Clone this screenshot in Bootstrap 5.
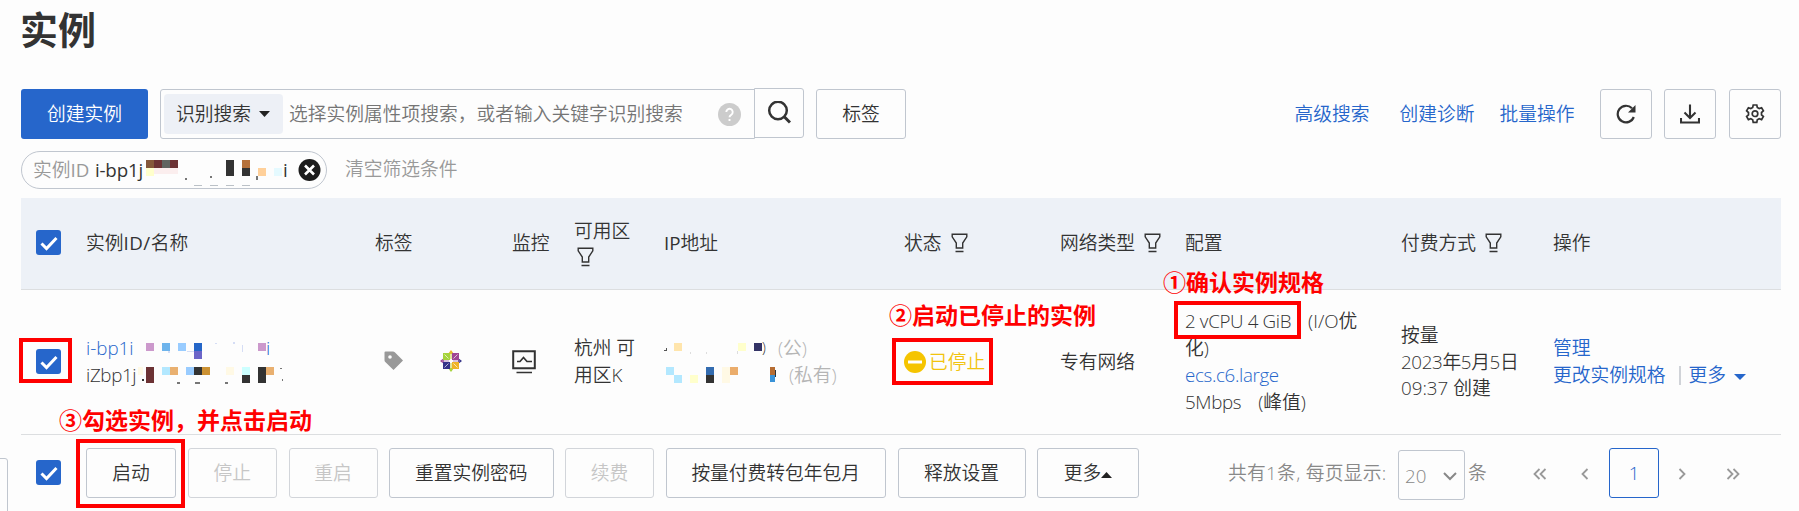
<!DOCTYPE html>
<html lang="zh-CN">
<head>
<meta charset="utf-8">
<title>实例</title>
<link rel="stylesheet" href="https://cdn.jsdelivr.net/npm/bootstrap@5.3.0/dist/css/bootstrap.min.css">
<style>
:root{--ink:#333;--brand:#2666cb;--edge:#c0c6cf}
body{width:1799px;height:511px;overflow:hidden;background:#fdfdfd;color:var(--ink);font:350 18.75px/26.8px "Open Sans","Noto Sans CJK SC",sans-serif}
a{color:var(--brand);text-decoration:none}
svg{display:block;flex:none}
.page{padding:0 18px 0 21px}
h1{font:700 38px/54px "Noto Sans CJK SC",sans-serif;margin:0 0 0 -1px;padding-top:1px;height:89px}
.tools{height:50px}
.btn{--bs-btn-font-size:18.75px;--bs-btn-font-weight:350;--bs-btn-padding-x:0;--bs-btn-padding-y:0;--bs-btn-border-radius:3px;height:50px;line-height:46px;white-space:nowrap;flex:none;display:flex;align-items:center;justify-content:center}
.btn-line{--bs-btn-border-color:var(--edge);--bs-btn-color:#333;--bs-btn-disabled-color:#c6c6c6;--bs-btn-disabled-border-color:#d2d5da;--bs-btn-disabled-opacity:1}
.btn-brand{background:var(--brand);color:#fff;width:127px}
.search{width:595px;height:50px;border:1px solid var(--edge);border-radius:3px 0 0 3px;padding-left:3px;margin-left:12px}
.mode{width:119px;height:40px;background:#edf0f6;border-radius:4px;padding-left:12px;gap:8px}
.placeholder-text{color:#757575;padding-left:6px}
.go{width:50px;margin-left:-1px;margin-top:-2px;border-radius:0 3px 3px 0}
.chips{height:59px;padding-top:12px}
.chip{width:306px;height:38px;border:1px solid var(--edge);border-radius:19px;padding-left:11px}
.muted{color:#999}
.latin{letter-spacing:-.35px}
.spaced{margin-left:17px}
.grid{table-layout:fixed;width:1760px;margin:0;border-collapse:separate;border-spacing:0}
.grid th,.grid td{font-weight:350;padding:0 0 0 12px;vertical-align:middle;border-bottom:1px solid #dcdee0;text-align:left}
.grid th{height:92px;background:#edf1f7}
.grid td{height:145px}
.grid th:first-child,.grid td:first-child{padding:0 0 2px 15px}
.box{width:25px;height:25px;background:var(--brand);border-radius:3px}
.foot{height:76px;padding-left:15px}
.foot .btn+.btn{margin-left:11.5px}
.pick{width:67px;height:50px;border:1px solid var(--edge);border-radius:3px;padding:2px 7px 0 6px;color:#888}
.mark-box{position:absolute;border:4px solid #f00}
.mark-text{position:absolute;color:#f00;font:700 23px/30px "Noto Sans CJK SC",sans-serif;white-space:nowrap}
.edge-tab{position:absolute;left:-5px;top:458px;width:13px;height:60px;border:1px solid var(--edge);border-radius:3px}
</style>
</head>
<body class="position-relative">
<svg width="0" height="0" class="position-absolute">
<defs>
<g id="filter" fill="none" stroke="#333" stroke-width="1.4"><path d="M1.200 1.200h14.600v2.600L11.700 10v5H5.300v-5L1.200 3.800z"/><path d="M4.500 18.500h8" stroke-width="1.500"/></g>
<g id="tick"><path d="M5.500 13.500l5 5L20.500 8" fill="none" stroke="#fff" stroke-width="3"/></g>
</defs>
</svg>
<main class="page">
<h1>实例</h1>
<div class="tools d-flex align-items-center">
  <button class="btn btn-brand">创建实例</button>
  <div class="search d-flex align-items-center flex-shrink-0">
    <div class="mode d-flex align-items-center"><span>识别搜索</span><svg width="11" height="6"><path d="M0 0h11L5.500 6z" fill="#222"/></svg></div>
    <span class="placeholder-text">选择实例属性项搜索，或者输入关键字识别搜索</span>
    <svg class="ms-auto" style="margin-right:13px" width="23" height="23"><circle cx="11.500" cy="11.500" r="11.500" fill="#ccc"/><path d="M8.300 9.100a3.200 3.200 0 1 1 5 2.600c-1.300.9-1.800 1.300-1.800 2.600M11.500 16v2" stroke="#fff" stroke-width="1.900" fill="none"/></svg>
  </div>
  <button class="btn btn-line go"><svg width="24" height="24" fill="none" stroke="#333"><circle cx="11" cy="9.500" r="8.800" stroke-width="2.500"/><path d="M17 15.500l6 6" stroke-width="3"/></svg></button>
  <button class="btn btn-line" style="width:90px;margin-left:12px">标签</button>
  <a class="ms-auto" href="#">高级搜索</a><a href="#" style="margin-left:30px">创建诊断</a><a href="#" style="margin-left:25px">批量操作</a>
  <button class="btn btn-line" style="width:52px;margin-left:25.500px"><svg width="20" height="20"><path d="M17.800 13A8.300 8.300 0 1 1 16 4.300" fill="none" stroke="#333" stroke-width="2.200"/><path d="M19.500 1v7.500H12z" fill="#333"/></svg></button>
  <button class="btn btn-line" style="width:52px;margin-left:12px"><svg width="20" height="20" fill="none" stroke="#333" stroke-width="2.100"><path d="M10 .5v13M4.500 8.500L10 14l5.500-5.500M1 14v4.500h18V14"/></svg></button>
  <button class="btn btn-line" style="width:52px;margin-left:13px"><svg width="20" height="20" viewBox="0 0 20 20" fill="none" stroke="#333" stroke-width="1.700"><path d="M8.200 1h3.600l.5 2.500 1.900 1.100 2.400-.9 1.800 3.100-1.900 1.700v2.300l1.900 1.700-1.800 3.100-2.400-.9-1.900 1.100-.5 2.500H8.200l-.5-2.500-1.900-1.100-2.400.9-1.800-3.100 1.900-1.700V8.500L1.600 6.800l1.800-3.100 2.400.9 1.900-1.100z"/><circle cx="10" cy="9.700" r="2.800"/></svg></button>
</div>
<div class="chips d-flex align-items-start">
  <div class="chip d-flex align-items-center">
    <span class="muted" style="width:62px">实例<span class="fw-normal">ID</span></span>
    <span class="fw-normal" style="width:51px;letter-spacing:-.2px">i-bp1j</span>
    <svg width="137" height="36" shape-rendering="crispEdges"><path fill="#fdfdfd" d="M0 8h137v17H0z"/>
      <path fill="#6c3234" d="M8 8h8v8H8zM24 8h8v8h-8z"/><path fill="#85583a" d="M0 8h8v8H0z"/><path fill="#5f6460" d="M16 8h8v8h-8z"/><path fill="#ffffcc" d="M0 16h8v8H0z"/><path fill="#fbeeee" d="M8 16h24v6H8z"/>
      <path fill="#333" d="M80 8h8v16h-8zM96 16h8v8h-8z"/><path fill="#b5713b" d="M96 8h8v8h-8z"/><path fill="#ffd09a" d="M112 16h8v8h-8z"/><path fill="#e5faff" d="M128 16h8v8h-8z"/>
      <path fill="#777" d="M39 26h2v2h-2zM64 24h2v2h-2zM110 24h2v4h-2z"/><path fill="#bbc1c7" d="M48 33h8v1h-8zM64 33h8v1h-8zM80 33h8v1h-8zM96 33h8v1h-8z"/></svg>
    <span class="fw-normal">i</span>
    <svg class="ms-auto" style="margin-right:5px" width="23" height="23"><circle cx="11.500" cy="11" r="11" fill="#1c1c1c"/><path d="M7 6.500l9 9M16 6.500l-9 9" stroke="#fff" stroke-width="2.600"/></svg>
  </div>
  <span class="muted" style="margin-left:18px;padding-top:5px">清空筛选条件</span>
</div>
<table class="grid">
<colgroup><col style="width:53px"><col style="width:289px"><col style="width:137px"><col style="width:62px"><col style="width:90px"><col style="width:240px"><col style="width:156px"><col style="width:125px"><col style="width:216px"><col style="width:152px"><col style="width:240px"></colgroup>
<thead><tr>
  <th><svg class="box"><use href="#tick"/></svg></th>
  <th>实例<span class="fw-normal" style="letter-spacing:.5px">ID/</span>名称</th><th>标签</th><th>监控</th>
  <th>可用区<svg width="18" height="20" style="margin:3px 0 2px 3px"><use href="#filter"/></svg></th>
  <th><span class="fw-normal">IP</span>地址</th>
  <th><div class="d-flex align-items-center">状态<svg style="margin-left:9px" width="18" height="20"><use href="#filter"/></svg></div></th>
  <th><div class="d-flex align-items-center">网络类型<svg style="margin-left:9px" width="18" height="20"><use href="#filter"/></svg></div></th>
  <th>配置</th>
  <th><div class="d-flex align-items-center">付费方式<svg style="margin-left:9px" width="18" height="20"><use href="#filter"/></svg></div></th>
  <th>操作</th>
</tr></thead>
<tbody><tr>
  <td><svg class="box"><use href="#tick"/></svg></td>
  <td>
    <div class="d-flex"><a href="#" style="width:52px">i-bp1i</a><svg width="128" height="27" shape-rendering="crispEdges"><path fill="#cc99cc" d="M8 8h8v8H8zM120 8h8v8h-8z"/><path fill="#6eb4ec" d="M24 8h8v8h-8z"/><path fill="#99ccff" d="M40 8h8v8h-8z"/><path fill="#2566c8" d="M56 8h8v8h-8z"/><path fill="#6c65c8" d="M56 16h8v8h-8z"/><path fill="#d5ddf5" d="M30 16h2v2h-2zM49 16h7v1h-7zM77 8h2v1h-2zM95 7h2v2h-2zM104 10h1v7h-1z"/></svg><a href="#">i</a></div>
    <div class="d-flex"><span class="latin" style="width:52px">iZbp1j</span><svg width="145" height="27" shape-rendering="crispEdges"><path fill="#fff9e5" d="M0 5h5v8H0zM88 5h8v8h-8z"/><path fill="#6c3234" d="M8 5h8v16H8z"/><path fill="#b3e8ff" d="M24 5h8v8h-8z"/><path fill="#e9b070" d="M32 5h8v8h-8zM128 5h8v8h-8z"/><path fill="#99ccff" d="M48 5h8v8h-8z"/><path fill="#333" d="M56 5h8v8h-8zM104 13h8v8h-8zM120 5h8v16h-8zM4 17h2v2H4z"/><path fill="#cc9233" d="M64 5h8v8h-8z"/><path fill="#ccffff" d="M104 5h8v8h-8z"/><path fill="#777" d="M39 20h3v2h-3zM57 20h5v2h-5zM87 20h3v2h-3zM142 6h2v1h-2zM144 17h1v2h-1z"/></svg></div>
  </td>
  <td><div class="d-flex align-items-center" style="padding-left:9px;margin-top:-3px"><svg width="20" height="20"><path d="M.5 1.500Q.5.500 1.500.500H9q1 0 1.800.8L19 9.500 9.500 19 1.300 11Q.5 10.300.5 9.300z" fill="#999"/><circle cx="6" cy="6" r="1.800" fill="#fdfdfd"/></svg>
    <svg width="22" height="22" style="margin-left:36px"><path d="M11 0l3 4H8z" fill="#efb426"/><path d="M11 22l-3-4h6z" fill="#a6d33b"/><path d="M0 11l4-3v6z" fill="#a04594"/><path d="M22 11l-4-3v6z" fill="#353389"/><path d="M3 3h7v7H3z" fill="#a6d33b"/><path d="M12 3h7v7h-7z" fill="#a04594"/><path d="M3 12h7v7H3z" fill="#353389"/><path d="M12 12h7v7h-7z" fill="#efb426"/><path d="M4.500 4.500l4 4M17.500 4.500l-4 4M4.500 17.500l4-4M17.500 17.500l-4-4" stroke="#fff" stroke-opacity=".65"/><path d="M11 2v7M11 13v7" stroke="#c4cd40"/><path d="M2 11h7M13 11h7" stroke="#b78bbd"/></svg></div></td>
  <td><svg width="24" height="24" fill="none" stroke="#333"><path d="M1.200 1.200h21.600v17H1.200z" stroke-width="2"/><path d="M5 11.500h3l3.500-4 3.500 4h5M4.500 22.500H20" stroke-width="1.700"/></svg></td>
  <td>杭州 可<br>用区K</td>
  <td>
    <div class="d-flex"><svg width="98" height="27" shape-rendering="crispEdges"><path fill="#ffe5ac" d="M10 8h8v8h-8z"/><path fill="#ffffcc" d="M74 8h8v8h-8z"/><path fill="#333366" d="M90 8h8v8h-8z"/><path fill="#555" d="M0 15h3v1H0zM2 13h1v2H2z"/><path fill="#ddd" d="M26 17h1v2h-1zM42 17h1v2h-1zM73 16h1v3h-1z"/></svg><span style="width:16px;font-size:14px">)</span><span style="color:#b5b5b5">(公)</span></div>
    <div class="d-flex"><svg width="112" height="27" shape-rendering="crispEdges"><path fill="#b3e8ff" d="M2 5h8v8H2zM10 13h8v8h-8z"/><path fill="#ffffcc" d="M26 13h8v8h-8z"/><path fill="#336cb0" d="M42 5h8v8h-8z"/><path fill="#333" d="M42 13h8v8h-8zM111 8h1v7h-1z"/><path fill="#fff9e5" d="M58 5h8v16h-8z"/><path fill="#ebad6c" d="M66 5h8v8h-8z"/><path fill="#b66d33" d="M106 5h5v8h-5z"/><path fill="#3a93d8" d="M106 13h5v7h-5z"/></svg><span style="margin-left:13px;color:#b5b5b5">(私有)</span></div>
  </td>
  <td><div class="d-flex align-items-center" style="color:#f2c40f;gap:3px"><svg width="22" height="22"><circle cx="11" cy="11" r="11" fill="#f5c400"/><path d="M4 11h14" stroke="#fff" stroke-width="3"/></svg>已停止</div></td>
  <td>专有网络</td>
  <td><span class="latin">2 vCPU 4 GiB</span><span class="spaced">(I/O优</span><br>化)<br><a class="latin" href="#">ecs.c6.large</a><br><span class="latin">5Mbps</span><span class="spaced">(峰值)</span></td>
  <td>按量<br><span class="latin">2023年5月5日</span><br>09:37 创建</td>
  <td><a href="#">管理</a><div class="d-flex align-items-center"><a href="#">更改实例规格</a><span style="width:2px;height:19px;background:#d0d3d8;margin:0 8px 0 13px"></span><a href="#">更多</a><svg class="ms-2" width="12" height="7" style="margin-top:4px"><path d="M0 0h12L6 6z" fill="#2666cb"/></svg></div></td>
</tr></tbody>
</table>
<div class="foot d-flex align-items-center">
  <svg class="box" style="margin:0 25px 2px 0"><use href="#tick"/></svg>
  <button class="btn btn-line" style="width:90px">启动</button>
  <button class="btn btn-line" style="width:89.5px" disabled>停止</button>
  <button class="btn btn-line" style="width:89px" disabled>重启</button>
  <button class="btn btn-line" style="width:164.5px">重置实例密码</button>
  <button class="btn btn-line" style="width:89px" disabled>续费</button>
  <button class="btn btn-line" style="width:220.5px">按量付费转包年包月</button>
  <button class="btn btn-line" style="width:128px">释放设置</button>
  <button class="btn btn-line" style="width:102px">更多<svg width="11" height="6" style="margin-top:4px"><path d="M0 6h11L5.500 0z" fill="#222"/></svg></button>
  <span style="color:#888;margin-left:89px;width:170px;white-space:nowrap;letter-spacing:.3px">共有1条, 每页显示:</span>
  <div class="pick d-flex align-items-center justify-content-between" style="margin-top:4px">20<svg width="14" height="9"><path d="M1 1l6 6 6-6" fill="none" stroke="#888" stroke-width="2"/></svg></div>
  <span style="color:#888;margin-left:3px;width:65px">条</span>
  <svg width="14" height="12" fill="none" stroke="#999" stroke-width="1.800" style="margin-top:2px"><path d="M6.500 1l-5 5 5 5M12.500 1l-5 5 5 5"/></svg>
  <svg width="8" height="12" fill="none" stroke="#999" stroke-width="1.800" style="margin:2px 0 0 34px"><path d="M6.500 1l-5 5 5 5"/></svg>
  <button class="btn" style="width:50px;margin-left:20px;border-color:var(--brand);color:var(--brand)">1</button>
  <svg width="8" height="12" fill="none" stroke="#999" stroke-width="1.800" style="margin:2px 0 0 19px"><path d="M1.500 1l5 5-5 5"/></svg>
  <svg width="14" height="12" fill="none" stroke="#999" stroke-width="1.800" style="margin:2px 0 0 40px"><path d="M1.500 1l5 5-5 5M7.500 1l5 5-5 5"/></svg>
</div>
</main>
<div class="edge-tab"></div>
<!-- step callouts -->
<div class="mark-text" style="left:1163px;top:266px">①确认实例规格</div>
<div class="mark-box" style="left:1174px;top:301px;width:127px;height:38px"></div>
<div class="mark-text" style="left:889px;top:299px">②启动已停止的实例</div>
<div class="mark-box" style="left:892px;top:338px;width:101px;height:47px"></div>
<div class="mark-box" style="left:19px;top:338px;width:53px;height:45px"></div>
<div class="mark-text" style="left:59px;top:404px">③勾选实例，并点击启动</div>
<div class="mark-box" style="left:76px;top:439px;width:109px;height:69px"></div>
<script src="https://cdn.jsdelivr.net/npm/bootstrap@5.3.0/dist/js/bootstrap.bundle.min.js"></script>
</body>
</html>
